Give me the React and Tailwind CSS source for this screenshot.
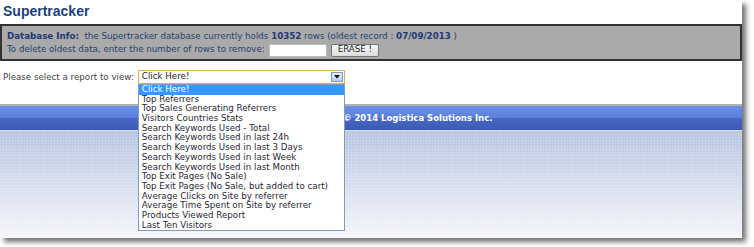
import React from "react";

const REPORTS = [
  "Click Here!",
  "Top Referrers",
  "Top Sales Generating Referrers",
  "Visitors Countries Stats",
  "Search Keywords Used - Total",
  "Search Keywords Used in last 24h",
  "Search Keywords Used in last 3 Days",
  "Search Keywords Used in last Week",
  "Search Keywords Used in last Month",
  "Top Exit Pages (No Sale)",
  "Top Exit Pages (No Sale, but added to cart)",
  "Average Clicks on Site by referrer",
  "Average Time Spent on Site by referrer",
  "Products Viewed Report",
  "Last Ten Visitors",
];

const ReportSelect = () => (
  <div className="relative w-[207px]">
    <div className="flex items-center h-[14px] border border-[#e2ac52] bg-white pl-[3px] pr-[1px] text-[#222]">
      <span className="flex-1">Click Here!</span>
      <span className="flex items-center justify-center w-[12px] h-[10px] border border-[#7a9cc8] bg-[linear-gradient(#e6eefa,#b9cdee)]">
        <svg width="6" height="4" viewBox="0 0 6 4">
          <path d="M0 0h6L3 3.5z" fill="#111" />
        </svg>
      </span>
    </div>
    <ul className="absolute left-0 top-[14px] z-10 w-full border border-[#7f9db9] bg-white text-[#2a1f33]">
      {REPORTS.map((r, i) => (
        <li
          key={r}
          className={`h-[9.7px] leading-[9.7px] pl-[3px] whitespace-nowrap ${i === 0 ? "bg-[#3399ff] text-white" : ""}`}
        >
          {r}
        </li>
      ))}
    </ul>
  </div>
);

export default function App() {
  return (
    <div className="w-[754px] h-[247px] bg-white font-['DejaVu_Sans',Verdana,sans-serif] text-[8.7px]">
      <div className="w-[742px] h-[238px] flex flex-col shadow-[4px_4px_5px_rgba(0,0,0,0.55)]">
        <h1 className="h-[24px] pl-[3px] pt-[3px] font-['Liberation_Sans',Arial,sans-serif] text-[14px] font-bold leading-[16px] text-[#1d3f7c]">
          Supertracker
        </h1>

        <div className="h-[37px] border-2 border-[#333] bg-[#aaaaaa] px-[5px] pt-[3px] text-[#28426c]">
          <div className="h-[14px] leading-[14px]">
            <b className="text-[#1d3a73]">Database Info:</b>&nbsp; the Supertracker database currently holds{" "}
            <b className="text-[#1d3a73]">10352</b> rows (oldest record : <b className="text-[#1d3a73]">07/09/2013</b> )
          </div>
          <div className="flex items-center gap-[4px] h-[14px]">
            <span>To delete oldest data, enter the number of rows to remove:</span>
            <span className="w-[58px] h-[13px] border border-[#bbb] bg-white" />
            <span className="h-[13px] px-[6px] flex items-center rounded-[2px] border border-[#777] bg-[linear-gradient(#fafafa,#dcdcdc)] text-[#222]">
              ERASE !
            </span>
          </div>
        </div>

        <div className="flex items-start gap-[4px] pt-[9px] pl-[3px] h-[43px] text-[#444]">
          <span className="leading-[14px]">Please select a report to view:</span>
          <ReportSelect />
        </div>

        <div className="h-[2px] bg-[#b0b0b0]" />
        <div className="h-[24px] flex items-center pl-[343px] bg-[linear-gradient(#6b90e6,#5a80dc_50%,#4868c6_52%,#3b5ab4)] text-[8.5px] font-bold text-white">
          © 2014 Logistica Solutions Inc.
        </div>
        <div className="h-[1px] bg-[#dcdcdc]" />
        <div className="flex-1 bg-[linear-gradient(rgba(255,255,255,0.12)_1px,transparent_1px),linear-gradient(90deg,rgba(255,255,255,0.12)_1px,transparent_1px),linear-gradient(#b6c5e0,#d9e0ef_55%,#f5f6fb)] bg-[size:3px_3px,3px_3px,100%_100%]" />
      </div>
    </div>
  );
}
